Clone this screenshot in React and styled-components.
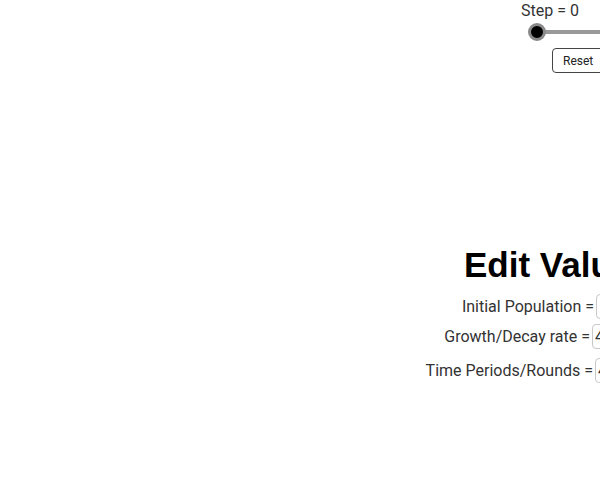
import React from 'react';
import styled, { createGlobalStyle } from 'styled-components';

const Global = createGlobalStyle`
  html, body { margin: 0; padding: 0; background: #fff; }
  body { font-family: Roboto, 'Liberation Sans', sans-serif; color: #333; }
`;

const Canvas = styled.div`
  position: relative;
  width: 600px;
  height: 480px;
  overflow: hidden;
  background: #fff;
`;

// GeoGebra-style free canvas: each group sits at its own canvas spot
const Group = styled.div`
  position: absolute;
  left: ${p => p.x}px;
  top: ${p => p.y}px;
  display: flex;
  flex-direction: column;
`;

const Caption = styled.div`
  font-size: 16px;
  line-height: 20px;
  color: #333;
  white-space: nowrap;
`;

const Slider = styled.div`
  position: relative;
  width: 120px;
  height: 18px;
  margin: 2px 0 0 7px;
`;

const Track = styled.div`
  position: absolute;
  left: 8px;
  right: 0;
  top: 7px;
  height: 4px;
  background: #999;
`;

const Knob = styled.div`
  position: absolute;
  left: 0;
  top: 0;
  width: 12px;
  height: 12px;
  border-radius: 50%;
  background: #000;
  border: 3px solid #8a8a8a;
`;

const Button = styled.button`
  width: 70px;
  height: 25px;
  margin: 7px 0 0 31px;
  padding: 0 0 0 10px;
  text-align: left;
  font-family: Roboto, 'Liberation Sans', sans-serif;
  font-size: 12px;
  color: #222;
  background: #fff;
  border: 1px solid #444;
  border-radius: 4px;
`;

const Panel = styled.div`
  position: absolute;
  left: 420px;
  top: 245px;
  width: 236px;
  display: flex;
  flex-direction: column;
  align-items: flex-end;
`;

const Title = styled.div`
  align-self: flex-start;
  margin-left: 44px;
  font-family: 'Liberation Sans', Arial, sans-serif;
  font-weight: bold;
  font-size: 35px;
  line-height: 40px;
  color: #000;
  white-space: nowrap;
`;

const Row = styled.div`
  display: flex;
  align-items: center;
  gap: 2px;
  margin-top: ${p => p.gap}px;
  margin-right: ${p => p.shift}px;
`;

const Label = styled.span`
  font-size: 16px;
  color: #333;
  white-space: nowrap;
`;

const Field = styled.div`
  box-sizing: border-box;
  width: 60px;
  height: 25px;
  border: 1px solid #c8c8c8;
  border-radius: 4px;
  padding: 0 0 0 2px;
  font-size: 16px;
  line-height: 23px;
  color: #333;
  background: #fff;
`;

const rows = [
  { label: 'Initial Population =', value: '', gap: 9, shift: 0 },
  { label: 'Growth/Decay rate =', value: '4', gap: 5, shift: 4 },
  { label: 'Time Periods/Rounds =', value: '4', gap: 9, shift: 1 },
];

export default function App() {
  return (
    <Canvas>
      <Global />
      <Group x={521} y={1}>
        <Caption>Step = 0</Caption>
        <Slider>
          <Track />
          <Knob />
        </Slider>
        <Button>Reset</Button>
      </Group>
      <Panel>
        <Title>Edit Values</Title>
        {rows.map(r => (
          <Row key={r.label} gap={r.gap} shift={r.shift}>
            <Label>{r.label}</Label>
            <Field>{r.value}</Field>
          </Row>
        ))}
      </Panel>
    </Canvas>
  );
}
